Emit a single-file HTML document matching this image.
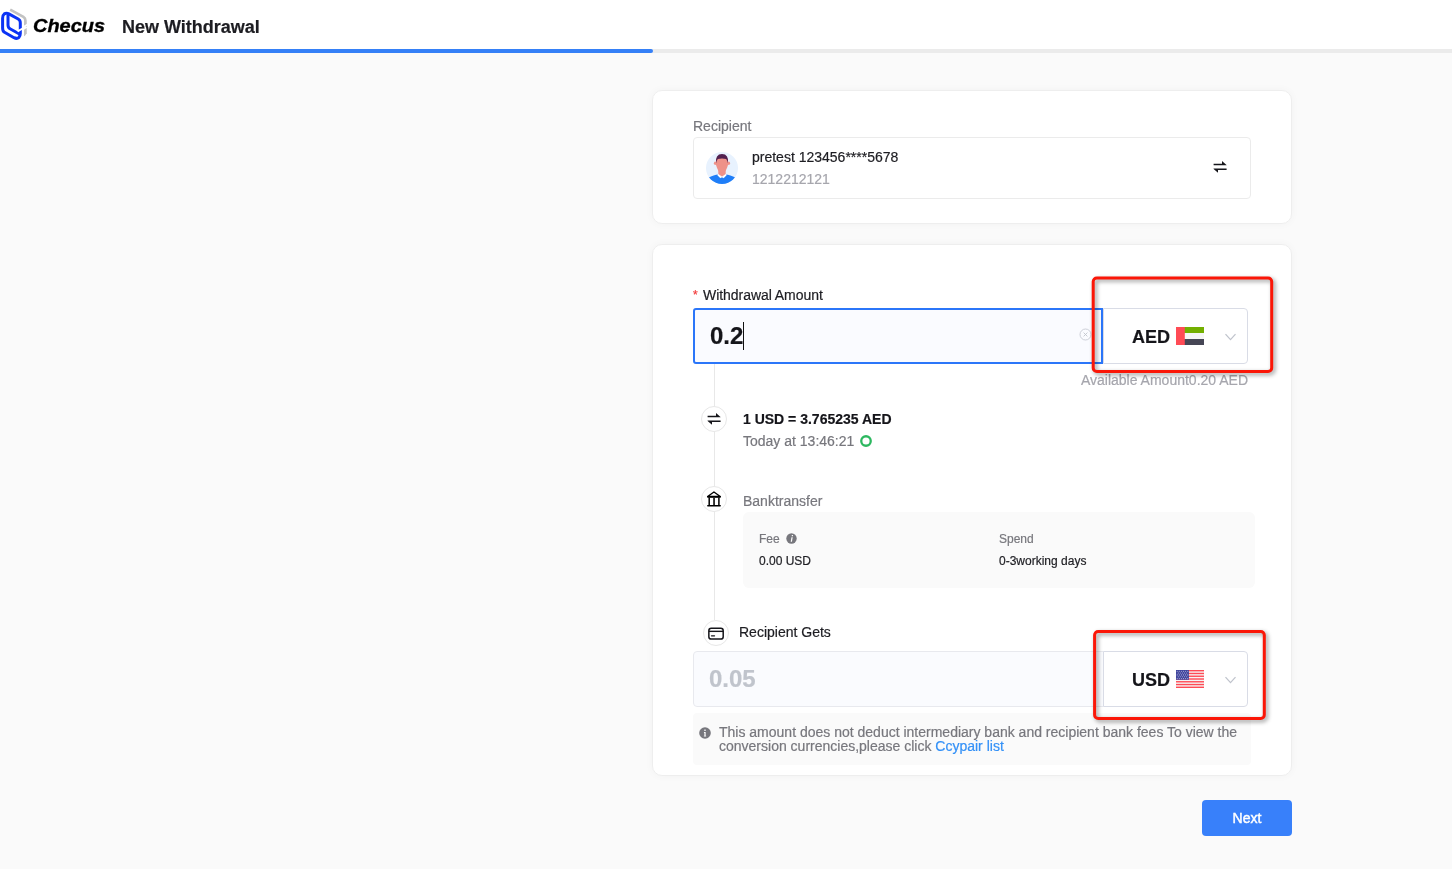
<!DOCTYPE html>
<html>
<head>
<meta charset="utf-8">
<title>New Withdrawal</title>
<style>
*{box-sizing:border-box;margin:0;padding:0}
html,body{width:1452px;height:869px;overflow:hidden;background:#fafafa}
body{font-family:"Liberation Sans",sans-serif;color:#1d1d22;position:relative;font-size:14px;-webkit-text-stroke:0.2px currentColor}
.abs{position:absolute}
.hdr{left:0;top:0;width:1452px;height:49px;background:#fff}
.bar{left:0;top:49px;width:1452px;height:4px;background:#ebebeb}
.barf{left:0;top:49px;width:653px;height:4px;background:#3580f7;border-radius:0 2px 2px 0}
.title{left:122px;top:17px;font-size:18px;font-weight:bold;line-height:21px;color:#1d1d22;white-space:nowrap}
.brand{left:33px;top:15px;font-size:19px;font-weight:bold;font-style:italic;line-height:22px;color:#000;white-space:nowrap;transform:scaleX(1.05);transform-origin:0 0;-webkit-text-stroke:0.35px #000}
.card{background:#fff;border:1px solid #eeeeee;border-radius:10px;box-shadow:0 0 8px rgba(0,0,0,0.035)}
.c1{left:652px;top:90px;width:640px;height:134px}
.c2{left:652px;top:244px;width:640px;height:532px}
.t{white-space:nowrap;line-height:16px}
.g{color:#77777d}
.lg{color:#a6a6ad}
.rbox{left:693px;top:137px;width:558px;height:62px;border:1px solid #ebebeb;border-radius:4px;background:#fff}
.inp1{left:693px;top:308px;width:410px;height:56px;border:2px solid #2b76f9;border-radius:3px 0 0 3px;background:#fafbff}
.sel{width:145px;height:56px;border:1px solid #d9dce6;border-radius:0 4px 4px 0;background:#fff}
.inp2{left:693px;top:651px;width:411px;height:56px;border:1px solid #e8e9ee;border-radius:4px 0 0 4px;background:#fafbfe}
.cur{font-size:18px;font-weight:bold;line-height:21px;color:#15151a}
.vline{left:714px;top:364px;width:1px;height:256px;background:#e8e8e8}
.circ{width:26px;height:26px;border-radius:50%;border:1px solid #e7e7e7;background:#fff}
.gbox{left:743px;top:512px;width:512px;height:76px;background:#fafafa;border-radius:6px}
.note{left:693px;top:713px;width:558px;height:52px;background:#fafafa;border-radius:4px}
.small{font-size:12px;line-height:14px}
.red{border:3px solid #ff1b10;border-radius:4px;box-shadow:1px 2px 4px rgba(0,0,0,0.35)}
.next{left:1202px;top:800px;width:90px;height:36px;background:#3880fa;border-radius:4px;color:#fff;text-align:center;line-height:36px;font-size:14px;-webkit-text-stroke:0.45px #fff}
</style>
</head>
<body>
<div id="root" style="position:absolute;left:0;top:0;width:1452px;height:869px;will-change:transform">
<div class="abs hdr"></div>
<div class="abs bar"></div>
<div class="abs barf"></div>
<!-- logo -->
<svg class="abs" style="left:0;top:0" width="30" height="46" viewBox="0 0 30 46">
  <path d="M10.2 9.6 L23.4 16.9 Q25.4 18.1 25.4 20.5 L25.4 27" fill="none" stroke="#c2c2c2" stroke-width="2.7" stroke-linecap="butt" stroke-linejoin="round"/>
  <path d="M24.05 29.8 L26.75 28.1 L26.75 33.2 L24.6 36.2 L24.05 35.8 Z" fill="#c2c2c2"/>
  <path d="M22.5 27.6 L28 24.4" stroke="#fff" stroke-width="1.9" fill="none"/>
  <path d="M8 14.8 L8 25 Q8 27.6 10 28.7 L19.8 34.3" fill="none" stroke="#0b33f5" stroke-width="3" stroke-linecap="butt" stroke-linejoin="round"/>
  <path d="M20.3 30 L20.3 22.8 Q20.3 20.2 18.2 19 L8.9 13.9 Q6.4 12.6 4.3 13.9 Q2.6 15.2 2.6 18.2 L2.6 28 Q2.6 31.2 4.5 32.3 L14 37.7 Q17 39.2 19 37.3 Q20.3 35.9 20.3 33.5 L20.3 30" fill="none" stroke="#0b33f5" stroke-width="3" stroke-linecap="butt" stroke-linejoin="round"/>
  <path d="M17.6 31.4 L23 28.3" stroke="#fff" stroke-width="1.9" fill="none"/>
</svg>
<div class="abs brand">Checus</div>
<div class="abs title">New Withdrawal</div>

<!-- card 1 -->
<div class="abs card c1"></div>
<div class="abs t g" style="left:693px;top:118px">Recipient</div>
<div class="abs rbox"></div>
<svg class="abs" style="left:706px;top:152px" width="32" height="32" viewBox="0 0 32 32">
  <defs><clipPath id="av"><circle cx="16" cy="16" r="16"/></clipPath></defs>
  <circle cx="16" cy="16" r="16" fill="#e8f2fe"/>
  <g clip-path="url(#av)">
    <path d="M2 26 Q8 22.8 12.5 22.6 L16 26 L19.5 22.6 Q24 22.8 30 26 L30 33 L2 33 Z" fill="#1f7ef8"/>
    <path d="M12.2 21.4 L16 25.2 L19.8 21.4 L20.6 23.2 L17.6 26.2 L16 24.6 L14.4 26.2 L11.4 23.2 Z" fill="#fff"/>
    <path d="M12.3 18 L19.7 18 L19.7 22 L16 24.6 L12.3 22 Z" fill="#ee9289"/>
    <ellipse cx="9.2" cy="11.3" rx="1.3" ry="1.8" fill="#ee9289"/>
    <ellipse cx="22.8" cy="11.3" rx="1.3" ry="1.8" fill="#ee9289"/>
    <path d="M10 7 Q16 3 22 7 L22 13 Q21 16.5 19.5 19 Q16 21.5 12.5 19 Q11 16.5 10 13 Z" fill="#ee9289"/>
    <path d="M10 11.5 Q9 2 16 2 Q23 2 22 11.5 Q21.5 8.5 20.2 7 Q16 6 11.8 7 Q10.5 8.5 10 11.5 Z" fill="#52204f"/>
  </g>
</svg>
<div class="abs t" style="left:752px;top:149px;color:#1d1d22">pretest 123456****5678</div>
<div class="abs t lg" style="left:752px;top:171px">1212212121</div>
<svg class="abs" style="left:1213px;top:160px" width="14" height="14" viewBox="0 0 14 14">
  <path d="M0.6 3.85 L9.0 3.85 L9.0 1.1 L13.5 4.9 L13.5 5.35 L0.6 5.35 Z M13.6 10.1 L5.0 10.1 L5.0 12.85 L0.6 9.1 L0.6 8.6 L13.6 8.6 Z" fill="#15151a"/>
</svg>

<!-- card 2 -->
<div class="abs card c2"></div>
<div class="abs t" style="left:693px;top:286.5px;color:#f23c3c;font-size:12px">*</div>
<div class="abs t" style="left:703px;top:287px;color:#1d1d22;letter-spacing:-0.05px">Withdrawal Amount</div>
<div class="abs vline"></div>
<div class="abs inp1"></div>
<div class="abs" style="left:710px;top:322px;font-size:24px;font-weight:bold;line-height:28px;color:#15151a;white-space:nowrap">0.2</div>
<div class="abs" style="left:743px;top:322px;width:1px;height:28px;background:#111"></div>
<svg class="abs" style="left:1079px;top:328.3px" width="13" height="13" viewBox="0 0 13 13">
  <circle cx="6.5" cy="6.5" r="5.5" fill="none" stroke="#c6c9d2" stroke-width="0.9"/>
  <path d="M4.6 4.6 L8.4 8.4 M8.4 4.6 L4.6 8.4" stroke="#c0c4cc" stroke-width="0.9"/>
</svg>
<div class="abs sel" style="left:1103px;top:308px"></div>
<div class="abs cur" style="left:1132px;top:327px">AED</div>
<svg class="abs" style="left:1176px;top:327px" width="28" height="18" viewBox="0 0 28 18">
  <rect x="0" y="0" width="28" height="6" fill="#73af00"/>
  <rect x="0" y="6" width="28" height="6" fill="#f5f5f5"/>
  <rect x="0" y="12" width="28" height="6" fill="#464655"/>
  <rect x="0" y="0" width="8.8" height="18" fill="#ff4b55"/>
</svg>
<svg class="abs" style="left:1224px;top:332px" width="13" height="10" viewBox="0 0 13 10">
  <path d="M1.5 2.2 L6.5 7.6 L11.5 2.2" fill="none" stroke="#bfc3cc" stroke-width="1.25"/>
</svg>
<div class="abs t lg" style="left:1048px;top:372px;width:200px;text-align:right">Available Amount0.20 AED</div>

<!-- step 1 -->
<div class="abs circ" style="left:701px;top:406px"></div>
<svg class="abs" style="left:707px;top:412px" width="14" height="14" viewBox="0 0 14 14">
  <path d="M0.6 3.85 L9.0 3.85 L9.0 1.1 L13.5 4.9 L13.5 5.35 L0.6 5.35 Z M13.6 10.1 L5.0 10.1 L5.0 12.85 L0.6 9.1 L0.6 8.6 L13.6 8.6 Z" fill="#15151a"/>
</svg>
<div class="abs t" style="left:743px;top:411px;font-weight:bold;color:#15151a">1 USD = 3.765235 AED</div>
<div class="abs t g" style="left:743px;top:433px">Today at 13:46:21</div>
<svg class="abs" style="left:860px;top:435px" width="12" height="12" viewBox="0 0 12 12"><circle cx="6" cy="6" r="4.75" fill="none" stroke="#2db860" stroke-width="2.3"/></svg>

<!-- step 2 -->
<div class="abs circ" style="left:701px;top:486px"></div>
<svg class="abs" style="left:706px;top:490px" width="16" height="18" viewBox="0 0 16 18">
  <path d="M7.95 1.95 L14.3 6.5 L1.6 6.5 Z" fill="none" stroke="#000" stroke-width="1.3" stroke-linejoin="round"/>
  <path d="M1.8 6.85 L14.2 6.85" stroke="#000" stroke-width="1.6" stroke-linecap="round"/>
  <path d="M3.2 7.4 L3.2 15.2 M12.9 7.4 L12.9 15.2" stroke="#000" stroke-width="1.5"/>
  <path d="M8.05 7.4 L8.05 15.2" stroke="#222" stroke-width="1.8"/>
  <path d="M1.8 15.7 L14.2 15.7" stroke="#000" stroke-width="1.5" stroke-linecap="round"/>
</svg>
<div class="abs t g" style="left:743px;top:493px">Banktransfer</div>
<div class="abs gbox"></div>
<div class="abs t small g" style="left:759px;top:532px">Fee</div>
<svg class="abs" style="left:786.3px;top:533px" width="11" height="11" viewBox="0 0 11 11">
  <circle cx="5.5" cy="5.5" r="5.2" fill="#77777d"/>
  <path d="M5.85 2.1 L7.1 2.1 L6.9 3.3 L5.65 3.3 Z M5.45 4.2 L6.7 4.2 L5.95 8.7 L4.7 8.7 Z" fill="#fff"/>
</svg>
<div class="abs t small" style="left:759px;top:554px;color:#1d1d22">0.00 USD</div>
<div class="abs t small g" style="left:999px;top:532px">Spend</div>
<div class="abs t small" style="left:999px;top:554px;color:#1d1d22">0-3working days</div>

<!-- step 3 -->
<div class="abs circ" style="left:703px;top:620px"></div>
<svg class="abs" style="left:708px;top:626px" width="16" height="15" viewBox="0 0 16 15">
  <rect x="0.85" y="2.25" width="14.35" height="10.8" rx="2.4" fill="none" stroke="#15151a" stroke-width="1.5"/>
  <path d="M0.85 5.35 L15.2 5.35" stroke="#15151a" stroke-width="1.4"/>
  <path d="M3.5 9.8 L6.5 9.8" stroke="#15151a" stroke-width="1.3" stroke-linecap="round"/>
</svg>
<div class="abs t" style="left:739px;top:624px;color:#1d1d22">Recipient Gets</div>
<div class="abs inp2"></div>
<div class="abs" style="left:709px;top:665px;font-size:24px;font-weight:bold;line-height:28px;color:#c0c4cc;white-space:nowrap">0.05</div>
<div class="abs sel" style="left:1103px;top:651px"></div>
<div class="abs cur" style="left:1132px;top:670px">USD</div>
<svg class="abs" style="left:1176px;top:670px" width="28" height="18" viewBox="0 0 28 18">
  <rect width="28" height="18" fill="#f5f5f5"/>
  <g fill="#ff4b55">
    <rect y="0" width="28" height="1.4"/><rect y="2.77" width="28" height="1.4"/><rect y="5.54" width="28" height="1.4"/>
    <rect y="8.31" width="28" height="1.4"/><rect y="11.08" width="28" height="1.4"/><rect y="13.85" width="28" height="1.4"/><rect y="16.6" width="28" height="1.4"/>
  </g>
  <rect width="12.9" height="9.8" fill="#3f449d"/>
  <g fill="#fff" opacity="0.6"><circle cx="1.20" cy="1.20" r="0.55"/><circle cx="3.30" cy="1.20" r="0.55"/><circle cx="5.40" cy="1.20" r="0.55"/><circle cx="7.50" cy="1.20" r="0.55"/><circle cx="9.60" cy="1.20" r="0.55"/><circle cx="11.70" cy="1.20" r="0.55"/><circle cx="2.25" cy="3.05" r="0.55"/><circle cx="4.35" cy="3.05" r="0.55"/><circle cx="6.45" cy="3.05" r="0.55"/><circle cx="8.55" cy="3.05" r="0.55"/><circle cx="10.65" cy="3.05" r="0.55"/><circle cx="1.20" cy="4.90" r="0.55"/><circle cx="3.30" cy="4.90" r="0.55"/><circle cx="5.40" cy="4.90" r="0.55"/><circle cx="7.50" cy="4.90" r="0.55"/><circle cx="9.60" cy="4.90" r="0.55"/><circle cx="11.70" cy="4.90" r="0.55"/><circle cx="2.25" cy="6.75" r="0.55"/><circle cx="4.35" cy="6.75" r="0.55"/><circle cx="6.45" cy="6.75" r="0.55"/><circle cx="8.55" cy="6.75" r="0.55"/><circle cx="10.65" cy="6.75" r="0.55"/><circle cx="1.20" cy="8.60" r="0.55"/><circle cx="3.30" cy="8.60" r="0.55"/><circle cx="5.40" cy="8.60" r="0.55"/><circle cx="7.50" cy="8.60" r="0.55"/><circle cx="9.60" cy="8.60" r="0.55"/><circle cx="11.70" cy="8.60" r="0.55"/></g>
</svg>
<svg class="abs" style="left:1224px;top:675px" width="13" height="10" viewBox="0 0 13 10">
  <path d="M1.5 2.2 L6.5 7.6 L11.5 2.2" fill="none" stroke="#bfc3cc" stroke-width="1.25"/>
</svg>

<div class="abs note"></div>
<svg class="abs" style="left:699px;top:727.1px" width="12" height="12" viewBox="0 0 12 12">
  <circle cx="6" cy="6" r="5.8" fill="#77777d"/>
  <path d="M5.35 2.6 L6.65 2.6 L6.65 3.9 L5.35 3.9 Z M4.95 5.1 L6.65 5.1 L6.65 8.7 L7.15 8.7 L7.15 9.5 L4.85 9.5 L4.85 8.7 L5.4 8.7 L5.4 5.9 L4.95 5.9 Z" fill="#fff"/>
</svg>
<div class="abs g" style="left:719px;top:725px;width:540px;line-height:14px;font-size:14px">This amount does not deduct intermediary bank and recipient bank fees To view the<br>conversion currencies,please click <span style="color:#3491f7">Ccypair list</span></div>

<!-- red annotation boxes -->
<svg class="abs" style="left:1080px;top:265px;filter:drop-shadow(2.2px 2.5px 2.2px rgba(0,0,0,0.42))" width="210" height="120" viewBox="1080 265 210 120">
  <rect x="1093.2" y="278" width="178.5" height="93.5" rx="3.6" fill="none" stroke="#fb1607" stroke-width="3"/>
</svg>
<svg class="abs" style="left:1080px;top:618px;filter:drop-shadow(2.2px 2.5px 2.2px rgba(0,0,0,0.42))" width="210" height="115" viewBox="1080 618 210 115">
  <rect x="1094.6" y="631.4" width="169.7" height="87.1" rx="3.6" fill="none" stroke="#fb1607" stroke-width="3"/>
</svg>
<div class="abs next">Next</div>
</div>
</body>
</html>
